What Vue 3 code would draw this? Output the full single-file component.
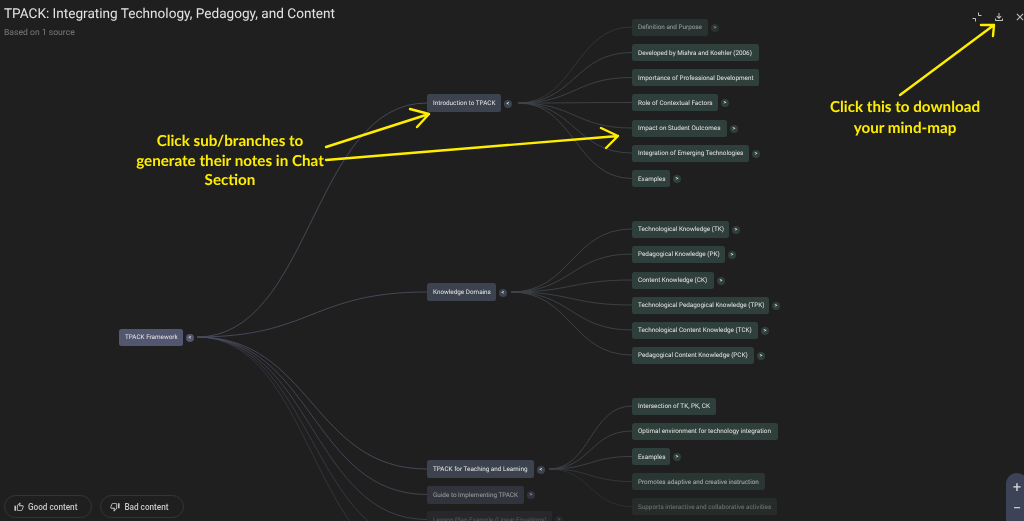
<script setup>
const branches = [
  { label: 'Introduction to TPACK', x: 427, y: 103, w: 74, o: 1, origin: [518, 103], children: [
    ['Definition and Purpose', 27, 76, 0.62, true], ['Developed by Mishra and Koehler (2006)', 52.5, 127, 1, false],
    ['Importance of Professional Development', 77.5, 127, 1, false], ['Role of Contextual Factors', 102.5, 86, 1, true],
    ['Impact on Student Outcomes', 128, 95, 1, true], ['Integration of Emerging Technologies', 153, 117, 1, true], ['Examples', 178.5, 38, 1, true] ] },
  { label: 'Knowledge Domains', x: 427, y: 292, w: 69, o: 1, origin: [511, 292], children: [
    ['Technological Knowledge (TK)', 229, 97, 1, true], ['Pedagogical Knowledge (PK)', 254, 93, 1, true], ['Content Knowledge (CK)', 280, 82, 1, true],
    ['Technological Pedagogical Knowledge (TPK)', 305, 137, 1, true], ['Technological Content Knowledge (TCK)', 330, 126, 1, true],
    ['Pedagogical Content Knowledge (PCK)', 355, 122, 1, true] ] },
  { label: 'TPACK for Teaching and Learning', x: 427, y: 469, w: 107, o: 1, origin: [549, 469], children: [
    ['Intersection of TK, PK, CK', 406, 84, 1, false], ['Optimal environment for technology integration', 431, 146, 1, false], ['Examples', 456.5, 38, 1, true],
    ['Promotes adaptive and creative instruction', 481.5, 133, 0.72, false], ['Supports interactive and collaborative activities', 506.5, 145, 0.42, false] ] },
  { label: 'Guide to Implementing TPACK', x: 427, y: 494.5, w: 97, o: 0.62, collapsed: true, children: [] },
  { label: 'Lesson Plan Example (Linear Equations)', x: 427, y: 519.5, w: 125, o: 0.28, collapsed: true, children: [] },
]

const curve = (x0, y0, x1, y1) => {
  const d = (x1 - x0) * 0.5
  return `M${x0} ${y0}C${x0 + d} ${y0} ${x1 - d} ${y1} ${x1} ${y1}`
}

const rootLinks = [[103, 1], [292, 1], [469, 1], [494.5, 0.9], [519.5, 0.75], [544.5, 0.6], [569.5, 0.5]].map(([y, o]) => ({
  d: curve(197, 337, 427, y),
  o,
}))

const childLinks = branches.flatMap((b) =>
  b.children.map((c) => ({ d: curve(b.origin[0], b.origin[1], 632, c[1]), o: c[3], key: b.label + c[0] }))
)

const leaves = branches.flatMap((b) =>
  b.children.map((c) => ({ label: c[0], y: c[1], w: c[2], o: c[3], more: c[4], key: b.label + c[0] }))
)
const pos = (x, y, w, o) => ({ left: x + 'px', top: y + 'px', width: w + 'px', opacity: o })
</script>

<template>
  <div class="page">
    <svg class="links" width="1024" height="521" viewBox="0 0 1024 521" fill="none">
      <path v-for="l in rootLinks" :key="l.d" :d="l.d" class="root-link" :style="{ opacity: l.o }" />
      <path v-for="l in childLinks" :key="l.key" :d="l.d" class="child-link" :style="{ opacity: l.o }" />
    </svg>

    <div class="node root" :style="pos(119, 337, 64, 1)">
      <span>TPACK Framework</span>
      <i class="toggle root-toggle">&lt;</i>
    </div>
    <div v-for="b in branches" :key="b.label" class="node branch" :style="pos(b.x, b.y, b.w, b.o)">
      <span>{{ b.label }}</span>
      <i class="toggle branch-toggle">{{ b.collapsed ? '>' : '<' }}</i>
    </div>
    <div v-for="l in leaves" :key="l.key" class="node leaf" :style="pos(632, l.y, l.w, l.o)">
      <span>{{ l.label }}</span>
      <i v-if="l.more" class="toggle leaf-toggle">&gt;</i>
    </div>

    <header class="head">
      <div>
        <h1>TPACK: Integrating Technology, Pedagogy, and Content</h1>
        <p>Based on 1 source</p>
      </div>
      <div class="tools">
        <svg viewBox="0 0 24 24" fill="none" stroke="currentColor" stroke-width="2"><path d="M15 3v6h6M3 15h6v6" /></svg>
        <svg viewBox="0 0 24 24" fill="currentColor"><path d="M18 15v3H6v-3H4v3c0 1.1.9 2 2 2h12c1.1 0 2-.9 2-2v-3h-2zm-1-4-1.41-1.41L13 12.17V4h-2v8.17L8.41 9.59 7 11l5 5 5-5z" /></svg>
        <svg viewBox="0 0 24 24" fill="currentColor"><path d="M19 6.41 17.59 5 12 10.59 6.41 5 5 6.41 10.59 12 5 17.59 6.41 19 12 13.41 17.59 19 19 17.59 13.41 12z" /></svg>
      </div>
    </header>

    <div class="feedback">
      <button>
        <svg viewBox="0 0 24 24" fill="currentColor"><path d="M9 21h9c.83 0 1.54-.5 1.84-1.22l3.02-7.05c.09-.23.14-.47.14-.73v-2c0-1.1-.9-2-2-2h-6.31l.95-4.57.03-.32c0-.41-.17-.79-.44-1.06L14.17 1 7.58 7.59C7.22 7.95 7 8.45 7 9v10c0 1.1.9 2 2 2zM9 9l4.34-4.34L12 10h9v2l-3 7H9V9zM1 9h4v12H1z" /></svg>
        Good content
      </button>
      <button>
        <svg viewBox="0 0 24 24" fill="currentColor"><path d="M15 3H6c-.83 0-1.54.5-1.84 1.22l-3.02 7.05c-.09.23-.14.47-.14.73v2c0 1.1.9 2 2 2h6.31l-.95 4.57-.03.32c0 .41.17.79.44 1.06L9.83 23l6.59-6.59c.36-.36.58-.86.58-1.41V5c0-1.1-.9-2-2-2zm0 12l-4.34 4.34L12 14H3v-2l3-7h9v10zm4-12h4v12h-4z" /></svg>
        Bad content
      </button>
    </div>

    <div class="zoom"><span>+</span><span>−</span></div>

    <svg class="arrows" width="1024" height="521" viewBox="0 0 1024 521" fill="none">
      <path d="M326 147 429 114M410 109 429 114 417 127" />
      <path d="M326 160 618 136M601 128 618 136 606 148" />
      <path d="M900 95 994 25M981 25 994 25 993 36" />
    </svg>
    <div class="note note-left">Click sub/branches to<br />generate their notes in Chat<br />Section</div>
    <div class="note note-right">Click this to download<br />your mind-map</div>
  </div>
</template>

<style>
html, body { margin: 0; background: #1f1f1f; }
</style>

<style scoped>
.page {
  position: relative;
  width: 1024px;
  height: 521px;
  overflow: hidden;
  background: #1f1f1f;
  font-family: Roboto, "Open Sans", sans-serif;
  text-rendering: geometricPrecision;
  filter: blur(0.25px);
}
.links, .arrows { position: absolute; inset: 0; }
.root-link { stroke: #4b4d5e; stroke-width: 0.9; }
.child-link { stroke: #3f4448; stroke-width: 0.9; }
.arrows path { stroke: #ffee00; stroke-width: 2.4; stroke-linecap: round; stroke-linejoin: round; }

.head {
  position: relative;
  display: flex;
  justify-content: space-between;
  padding: 5px 0 0 4px;
}
.head h1 { margin: 0; font-size: 13.6px; line-height: 18px; font-weight: 400; color: #e3e3e3; }
.head p { margin: 4px 0 0; font-size: 8.6px; line-height: 12px; color: #7a7a7a; }
.tools { display: flex; gap: 9.5px; color: #c4c4c4; margin: 6px -2px 0 0; }
.tools svg { width: 12px; height: 12px; }

.node {
  position: absolute;
  height: 17px;
  margin-top: -8.5px;
  box-sizing: border-box;
  padding-left: 6px;
  border-radius: 2.5px;
  display: flex;
  align-items: center;
  white-space: nowrap;
  font-size: 6.35px;
  color: #e6e6e6;
}
.root { background: #53566f; }
.branch { background: #3c424e; height: 18px; margin-top: -9px; }
.leaf { background: #2f3f3b; }
.toggle {
  position: absolute;
  left: calc(100% + 3px);
  top: 50%;
  width: 8px;
  height: 8px;
  margin-top: -3.5px;
  border-radius: 50%;
  font-style: normal;
  font-size: 5.5px;
  font-weight: 700;
  line-height: 8px;
  text-align: center;
  color: #dcdcdc;
}
.root-toggle { background: #53566f; }
.branch-toggle { background: #3c424e; }
.leaf-toggle { background: #2f3f3b; }

.feedback { position: absolute; left: 4px; bottom: 3px; display: flex; gap: 8px; }
.feedback button {
  display: flex;
  align-items: center;
  gap: 4px;
  height: 23px;
  padding: 0 14px 0 9px;
  border: 1px solid #353535;
  border-radius: 12px;
  background: transparent;
  color: #c7c7c7;
  font: 500 8.2px Roboto, sans-serif;
}
.feedback svg { width: 10px; height: 10px; }

.zoom {
  position: absolute;
  right: -4px;
  top: 473px;
  width: 22px;
  height: 48px;
  padding: 3px 0;
  box-sizing: border-box;
  border-radius: 11px 11px 0 0;
  background: #3d4357;
  color: #d9d9d9;
  display: flex;
  flex-direction: column;
  justify-content: space-around;
  align-items: center;
  font-size: 15px;
  line-height: 20px;
}
.zoom span { display: block; }

.note {
  position: absolute;
  text-align: center;
  color: #ffee00;
  font: 700 15.2px/19.5px Lato, sans-serif;
  white-space: nowrap;
}
.note-left { left: 130px; width: 200px; top: 132px; }
.note-right { left: 805px; width: 200px; top: 97px; line-height: 20.5px; }
</style>
